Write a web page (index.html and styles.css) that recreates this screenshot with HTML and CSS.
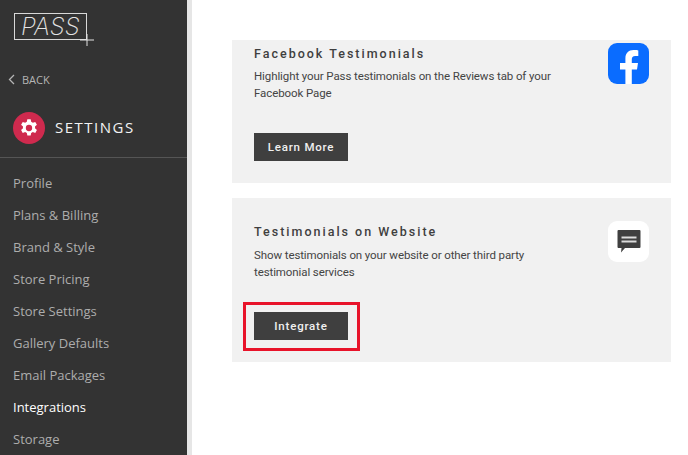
FILE: index.html
```html
<!DOCTYPE html>
<html lang="en">
<head>
  <meta charset="UTF-8">
  <meta name="viewport" content="width=device-width, initial-scale=1.0">
  <title>Settings - Integrations</title>
  <link rel="stylesheet" href="styles.css">
</head>
<body>

<div class="page">
  <aside class="sidebar">
    <div class="logo">
      <span class="logo-text">PASS</span>
      <svg class="logo-plus" width="14" height="12" viewBox="0 0 14 12"><path d="M0 6H14M7 0V12" stroke="#e4e4e4" stroke-width="1" fill="none"/></svg>
    </div>

    <a class="back" href="#">
      <svg width="7" height="11" viewBox="0 0 7 11"><path d="M6 1L1.500 5.500L6 10" stroke="#b5b5b5" stroke-width="1.300" fill="none"/></svg>
      <span>BACK</span>
    </a>

    <div class="section-head">
      <span class="section-icon">
        <svg width="20" height="20" viewBox="0 0 24 24"><path fill="#fff" fill-rule="evenodd" d="M10 1.500h4l.6 3a8 8 0 0 1 2 1.150l2.900-1 2 3.450-2.300 2a8 8 0 0 1 0 2.300l2.300 2-2 3.450-2.900-1a8 8 0 0 1-2 1.150l-.6 3h-4l-.6-3a8 8 0 0 1-2-1.150l-2.900 1-2-3.450 2.300-2a8 8 0 0 1 0-2.300l-2.300-2 2-3.450 2.900 1a8 8 0 0 1 2-1.150zM12 8.200a3.800 3.800 0 1 0 0 7.600 3.800 3.800 0 0 0 0-7.600z"/></svg>
      </span>
      <span class="section-title">SETTINGS</span>
    </div>

    <nav class="side-nav">
      <a href="#">Profile</a>
      <a href="#">Plans &amp; Billing</a>
      <a href="#">Brand &amp; Style</a>
      <a href="#">Store Pricing</a>
      <a href="#">Store Settings</a>
      <a href="#">Gallery Defaults</a>
      <a href="#">Email Packages</a>
      <a href="#" class="active">Integrations</a>
      <a href="#">Storage</a>
    </nav>
  </aside>

  <main class="content">
    <section class="card card-first">
      <div class="card-body">
        <h3>Facebook Testimonials</h3>
        <p>Highlight your Pass testimonials on the Reviews tab of your Facebook Page</p>
        <a class="btn" href="#">Learn More</a>
      </div>
      <div class="app-icon app-icon-fb">
        <svg width="41" height="41" viewBox="0 0 41 41"><path fill="#fff" d="M17.400 41V26.400h-5.400v-6.300h5.400v-4.600c0-5.500 3.200-8.500 8.100-8.500 2.200 0 4 .2 4.800.4v5.600h-3c-2.700 0-3.500 1.500-3.500 3.500v3.600h6.200l-1 6.300h-5.200V41z"/></svg>
      </div>
    </section>

    <section class="card card-second">
      <div class="card-body">
        <h3>Testimonials on Website</h3>
        <p>Show testimonials on your website or other third party testimonial services</p>
        <div class="highlight">
          <a class="btn" href="#">Integrate</a>
        </div>
      </div>
      <div class="app-icon app-icon-chat">
        <svg width="24" height="23" viewBox="0 0 24 23"><path fill="#3f3f3f" d="M1.500 0h21a1 1 0 0 1 1 1v16a1 1 0 0 1-1 1H8l-4 4.500.5-4.500h-3a1 1 0 0 1-1-1V1a1 1 0 0 1 1-1z"/><path fill="#dcdcdc" d="M4.500 6.500h15v2h-15zM4.500 10.500h15v2h-15z"/></svg>
      </div>
    </section>
  </main>
</div>

</body>
</html>
```

FILE: styles.css
```css
html, body {
  margin: 0;
  padding: 0;
  height: 100%;
  background-color: #fff;
}
body {
  overflow: hidden;
  font-family: "Roboto", sans-serif;
}
a {
  text-decoration: none;
}
.page {
  display: flex;
  height: 455px;
}

/* left menu */
.sidebar {
  width: 187px;
  flex-shrink: 0;
  box-sizing: content-box;
  background-color: #333;
  border-right: 5px solid #e6e6e6;
  overflow: hidden;
}
.logo {
  position: relative;
  width: 71px;
  height: 25px;
  margin: 13px 0 0 14px;
  border: 1px solid #d8d8d8;
}
.logo-text {
  display: block;
  padding-left: 6px;
  font-family: "Inter", sans-serif;
  font-size: 24px;
  font-weight: 200;
  font-style: italic;
  line-height: 25px;
  color: #e4e4e4;
}
.logo-plus {
  position: absolute;
  right: -8px;
  bottom: -7px;
}
.back {
  display: flex;
  align-items: center;
  gap: 7px;
  margin: 32px 0 0 8px;
  height: 14px;
  font-family: "Open Sans", sans-serif;
  font-size: 11px;
  color: #b5b5b5;
}
.section-head {
  display: flex;
  align-items: center;
  gap: 10px;
  height: 51px;
  margin-top: 16px;
  padding-left: 13px;
  border-bottom: 1px solid #555;
  padding-bottom: 4px;
}
.section-icon {
  display: flex;
  align-items: center;
  justify-content: center;
  width: 32px;
  height: 32px;
  border-radius: 50%;
  background-color: #cf2a4e;
}
.section-title {
  margin-bottom: 2px;
  font-family: "Open Sans", sans-serif;
  font-size: 15px;
  letter-spacing: 1.500px;
  color: #f2f2f2;
}
.side-nav {
  display: flex;
  flex-direction: column;
  margin-top: 9px;
  padding-left: 13px;
}
.side-nav a {
  height: 32px;
  line-height: 32px;
  font-family: "Open Sans", sans-serif;
  font-size: 13px;
  color: #adadad;
}
.side-nav a.active {
  color: #fff;
}

/* cards */
.content {
  flex: 1;
  padding: 40px 17px 0 40px;
}
.card {
  display: flex;
  justify-content: space-between;
  width: 439px;
  box-sizing: border-box;
  background-color: #f1f1f1;
  padding: 0 22px;
}
.card-first {
  height: 143px;
}
.card-second {
  height: 164px;
  margin-top: 15px;
  padding-top: 20px;
}
.card-body {
  width: 320px;
}
.card h3 {
  margin: 5px 0 0;
  font-size: 12.500px;
  font-weight: 500;
  line-height: 18px;
  letter-spacing: 2px;
  color: #3f3f3f;
}
.card p {
  margin: 5px 0 0;
  font-size: 11.500px;
  line-height: 17px;
  letter-spacing: -0.100px;
  color: #444;
}
.card-second p {
  margin-top: 6px;
}
.btn {
  display: block;
  width: 94px;
  height: 28px;
  line-height: 28px;
  text-align: center;
  font-size: 11.500px;
  font-weight: 500;
  letter-spacing: 0.800px;
  color: #f0f0f0;
  background-color: #3f3f3f;
}
.card-first .btn {
  margin-top: 31px;
}
.highlight {
  box-sizing: border-box;
  width: 117px;
  margin: 21px 0 0 -11px;
  padding: 7px 0 8px 8px;
  border: 3px solid #e8132a;
}
.app-icon {
  display: flex;
  align-items: center;
  justify-content: center;
  width: 41px;
  height: 41px;
  margin: 3px 0 0;
  border-radius: 9px;
  overflow: hidden;
}
.app-icon-fb {
  background-color: #0a6cff;
}
.app-icon-chat {
  background-color: #fff;
  margin-top: 3px;
}
```
